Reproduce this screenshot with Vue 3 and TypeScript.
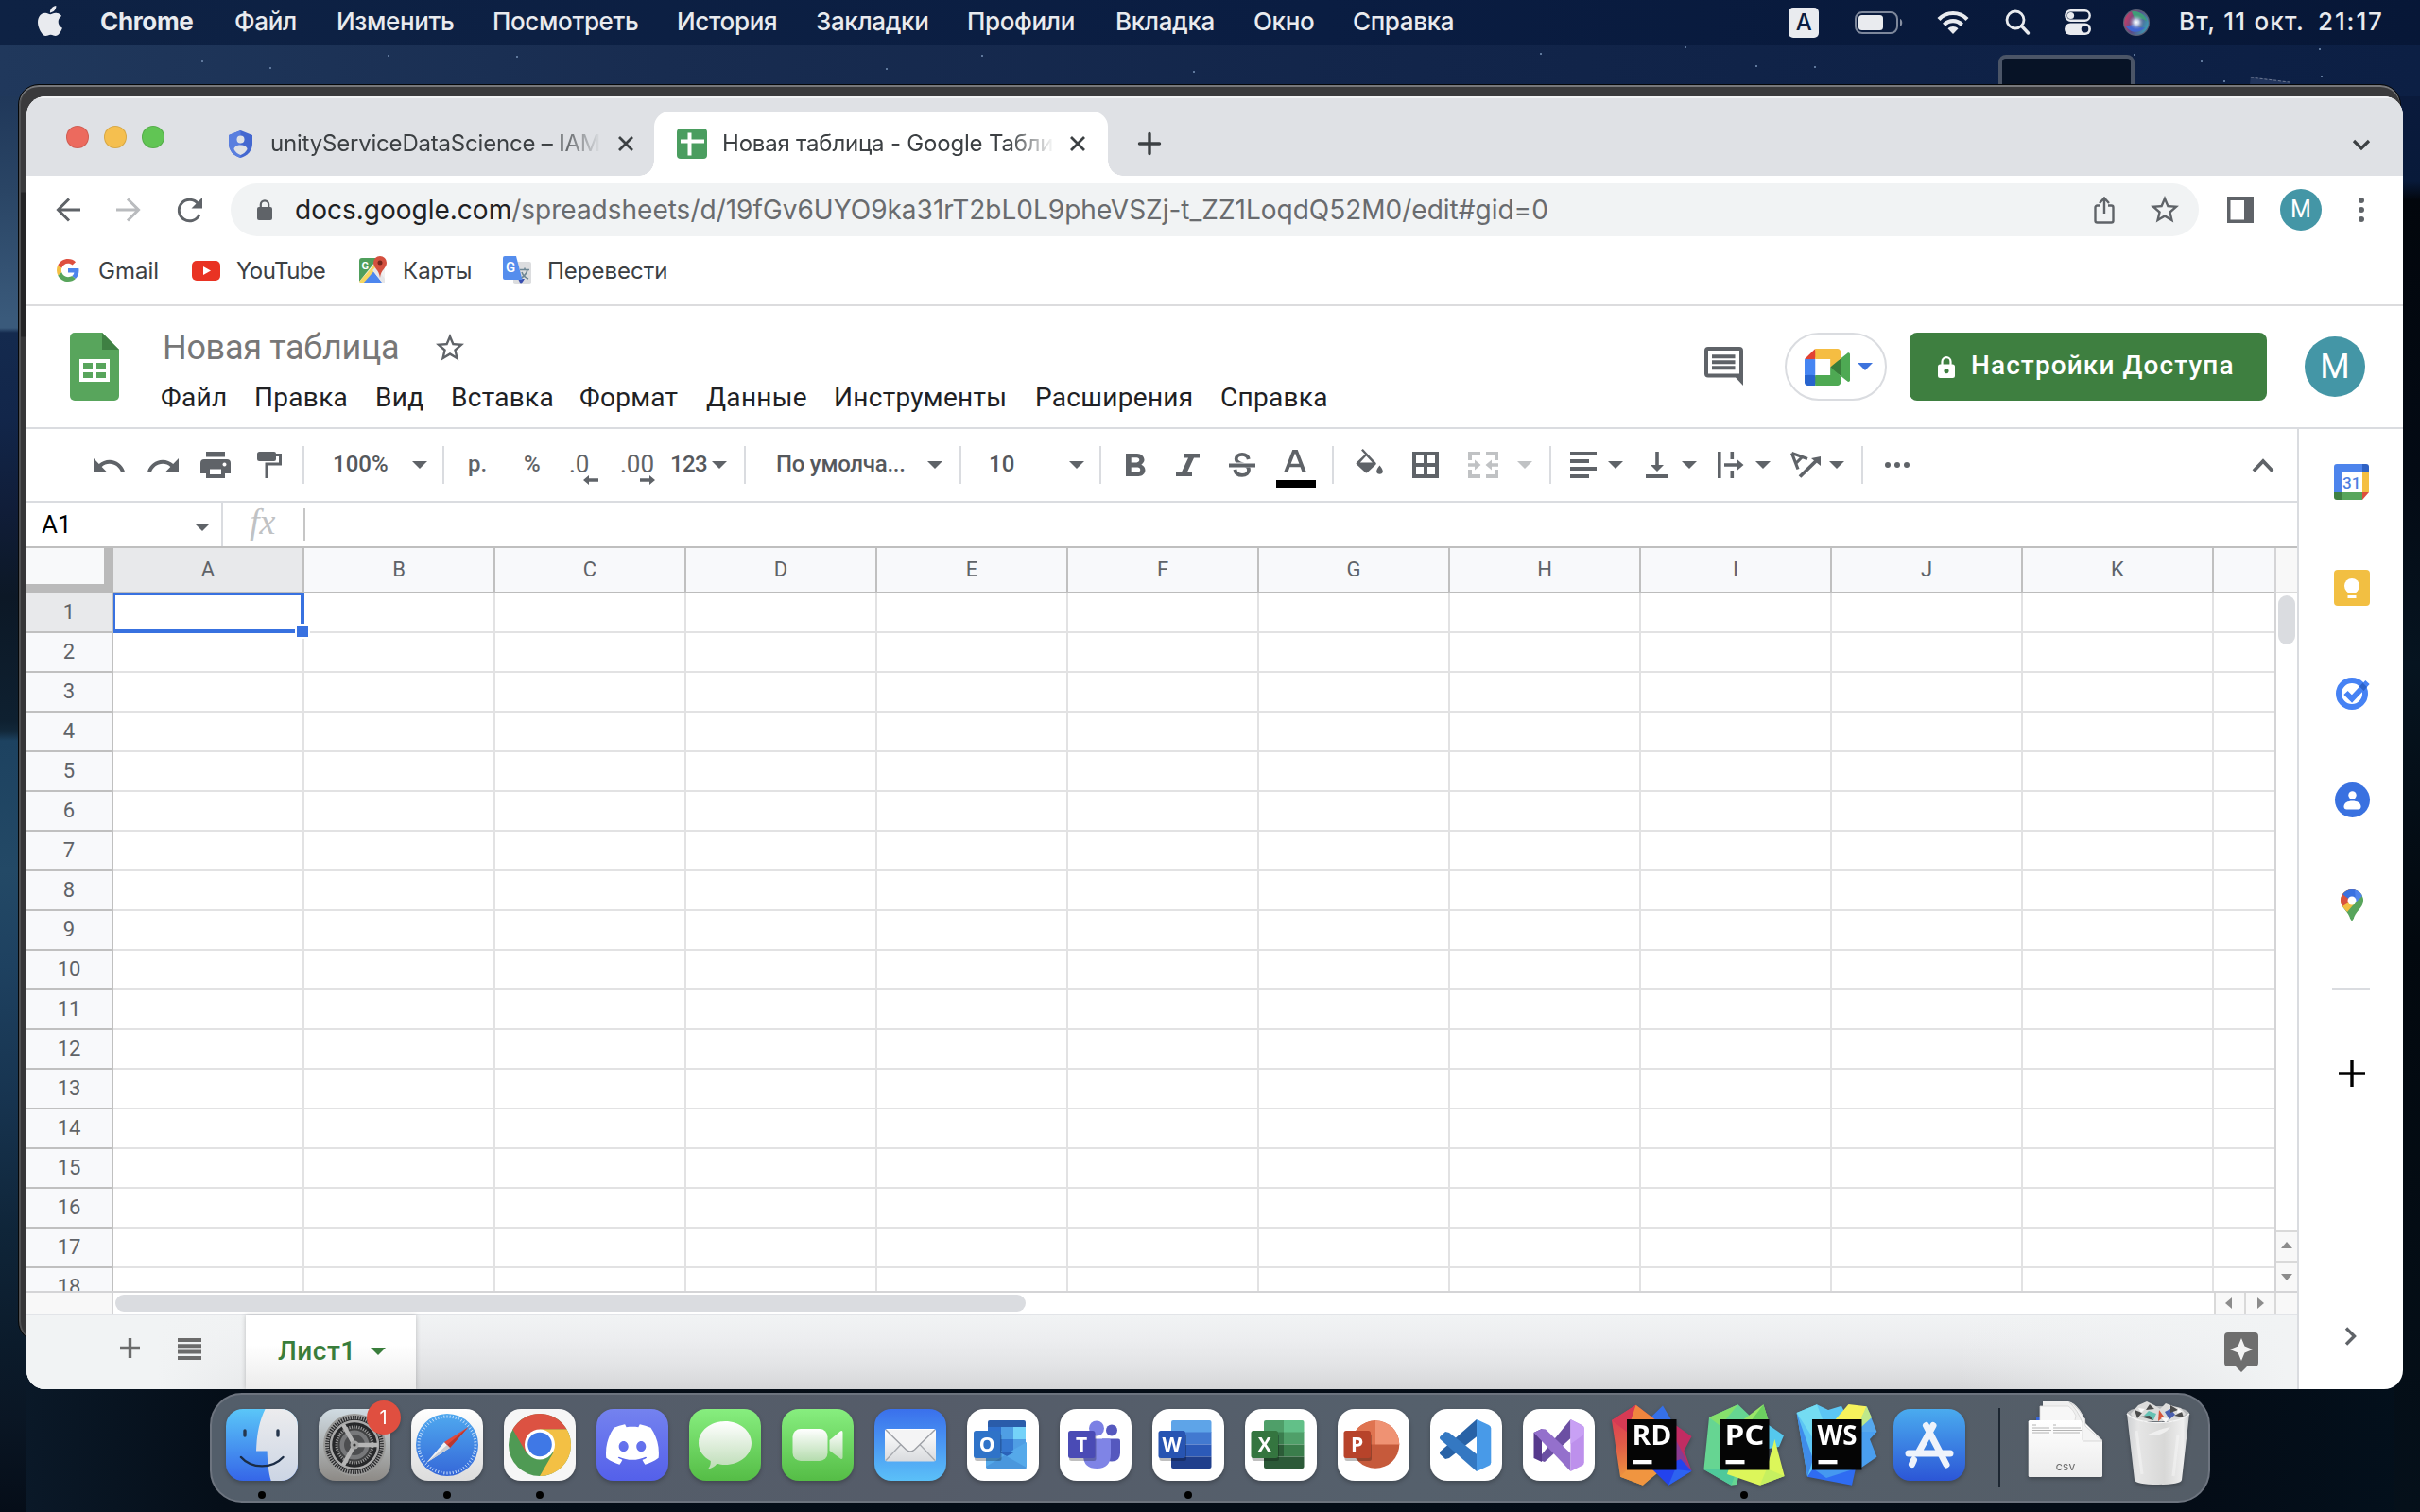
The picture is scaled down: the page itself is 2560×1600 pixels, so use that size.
<script setup lang="ts">
import { h } from 'vue'

interface IconDef {
  w: number
  h: number
  vb?: string
  body: string
}

const ARROW = '#5f6368'

const G_LOGO =
  '<path fill="#de4f3f" d="M24 9.500c3.540 0 6.710 1.220 9.210 3.600l6.850-6.850C35.900 2.380 30.470 0 24 0 14.620 0 6.510 5.380 2.560 13.220l7.980 6.190C12.430 13.720 17.740 9.500 24 9.500z"/>' +
  '<path fill="#4d84ec" d="M46.980 24.550c0-1.570-.15-3.090-.38-4.550H24v9.020h12.940c-.58 2.960-2.260 5.480-4.780 7.180l7.730 6c4.510-4.180 7.090-10.360 7.090-17.650z"/>' +
  '<path fill="#f4bf42" d="M10.530 28.590c-.48-1.450-.76-2.990-.76-4.590s.27-3.140.76-4.590l-7.980-6.190C.92 16.460 0 20.120 0 24c0 3.880.92 7.540 2.560 10.780l7.970-6.190z"/>' +
  '<path fill="#58a55c" d="M24 48c6.480 0 11.930-2.130 15.890-5.810l-7.730-6c-2.150 1.450-4.920 2.300-8.160 2.300-6.260 0-11.570-4.220-13.470-9.910l-7.980 6.190C6.510 42.620 14.620 48 24 48z"/>'

const STAR =
  'M22 9.240l-7.190-.62L12 2 9.190 8.630 2 9.240l5.460 4.730L5.820 21 12 17.270 18.180 21l-1.630-7.030L22 9.240zM12 15.400l-3.760 2.270 1-4.280-3.320-2.880 4.380-.38L12 6.100l1.710 4.040 4.380.38-3.320 2.880 1 4.280L12 15.400z'

const icons: Record<string, IconDef> = {
  apple: {
    w: 26, h: 32, vb: '2.2 0 19.600 24',
    body: '<path fill="#e9ebef" d="M12.152 6.896c-.948 0-2.415-1.078-3.96-1.04-2.04.027-3.91 1.183-4.961 3.014-2.117 3.675-.546 9.103 1.519 12.09 1.013 1.454 2.208 3.09 3.792 3.039 1.52-.065 2.09-.987 3.935-.987 1.831 0 2.35.987 3.96.948 1.637-.026 2.676-1.48 3.676-2.948 1.156-1.688 1.636-3.325 1.662-3.415-.039-.013-3.182-1.221-3.22-4.857-.026-3.04 2.48-4.494 2.597-4.559-1.429-2.09-3.623-2.324-4.39-2.376-2-.156-3.675 1.09-4.61 1.09zM15.53 3.83c.843-1.012 1.4-2.427 1.245-3.83-1.207.052-2.662.805-3.532 1.818-.78.896-1.454 2.338-1.273 3.714 1.338.104 2.715-.688 3.559-1.701"/>',
  },
  battery: {
    w: 52, h: 24,
    body: '<rect x="1" y="1" width="44" height="22" rx="7" fill="none" stroke="#7d879b" stroke-width="2"/><rect x="4" y="4" width="26" height="16" rx="3.500" fill="#e9ebef"/><path d="M48 8c3 1 3 7 0 8z" fill="#8790a2"/>',
  },
  wifi: {
    w: 34, h: 25,
    body: '<g fill="none" stroke="#e9ebef" stroke-width="4.200"><path d="M2 9.500C10 .800 24 .800 32 9.500"/><path d="M7.500 15.200c5.500-5.400 13.500-5.400 19 0"/></g><path fill="#e9ebef" d="M11.500 19.200c3-3 8-3 11 0L17 25z"/>',
  },
  search: {
    w: 27, h: 27,
    body: '<circle cx="11" cy="11" r="9" fill="none" stroke="#e9ebef" stroke-width="2.800"/><path d="M17.500 17.500l7 7.500" stroke="#e9ebef" stroke-width="3.400" stroke-linecap="round"/>',
  },
  control: {
    w: 28, h: 27,
    body: '<rect x="1.300" y="1.300" width="25.400" height="10.400" rx="5.200" fill="none" stroke="#e9ebef" stroke-width="2.400"/><circle cx="6.500" cy="6.500" r="3.600" fill="#e9ebef"/><rect x="0" y="14.500" width="28" height="12.500" rx="6.200" fill="#e9ebef"/><circle cx="21.500" cy="20.800" r="3.800" fill="#0b1c40"/>',
  },
  siri: {
    w: 28, h: 28,
    body: '<defs><radialGradient id="siriCore"><stop offset="0" stop-color="#fff"/><stop offset=".35" stop-color="#dfeeff" stop-opacity=".8"/><stop offset="1" stop-color="#88a" stop-opacity="0"/></radialGradient><linearGradient id="siriBase" x1="0" y1=".3" x2="1" y2=".7"><stop offset="0" stop-color="#c93d66"/><stop offset=".45" stop-color="#5a4a86"/><stop offset="1" stop-color="#3aa0b8"/></linearGradient></defs><circle cx="14" cy="14" r="14" fill="#5a6076"/><circle cx="14" cy="14" r="12.800" fill="url(#siriBase)"/><path d="M9 2.500c8-2 15 4 16 10-5-4-9-2-13-3z" fill="#3f9c78"/><path d="M3 18c4 6 13 9 20 1-7 2-9-3-13-3z" fill="#3f66d0"/><circle cx="14" cy="13.500" r="8" fill="url(#siriCore)"/>',
  },
  shield: {
    w: 25, h: 29,
    body: '<path d="M12.500 0L25 5v9c0 7-5 13-12.500 15C5 27 0 21 0 14V5z" fill="#4367d0"/><path d="M12.500 0L0 5v9c0 7 5 13 12.500 15z" fill="#5a7fdf"/><circle cx="12.500" cy="9.500" r="4" fill="#dfe1e5"/><path d="M12.500 15.500c4 0 7 2 7 4.500-1.500 3-4 5-7 6-3-1-5.500-3-7-6 0-2.500 3-4.500 7-4.500z" fill="#dfe1e5"/>',
  },
  close: { w: 18, h: 18, body: '<path d="M2 2l14 14M16 2L2 16" stroke="#3c4043" stroke-width="2.800"/>' },
  sheetFav: {
    w: 32, h: 32,
    body: '<rect width="32" height="32" rx="4" fill="#4a9d5f"/><path d="M11.500 4.500h4v24h-4zM4 11.500h25v4H4z" fill="#fff"/>',
  },
  plusTab: { w: 24, h: 24, body: '<path d="M12 1.500v21M1.500 12h21" stroke="#3c4043" stroke-width="3.400" stroke-linecap="round"/>' },
  chevDown: { w: 20, h: 12, body: '<path d="M2 2l8 8 8-8" fill="none" stroke="#3c4043" stroke-width="3.200"/>' },
  back: { w: 26, h: 26, body: '<path d="M26 13H3M14 1.500L2.500 13 14 24.500" fill="none" stroke="#5f6368" stroke-width="3"/>' },
  forward: { w: 26, h: 26, body: '<path d="M0 13h23M12 1.500L23.500 13 12 24.500" fill="none" stroke="#b9bbbe" stroke-width="3"/>' },
  reload: { w: 27, h: 27, body: '<path d="M22.500 6.500A11.300 11.300 0 1 0 24 18" fill="none" stroke="#5f6368" stroke-width="3"/><path d="M27 0v11.500H15.500z" fill="#5f6368"/>' },
  lockBar: { w: 16, h: 22, body: '<rect y="8" width="16" height="14" rx="2" fill="#5f6368"/><path d="M3.800 9V5.500a4.200 4.200 0 0 1 8.400 0V9" fill="none" stroke="#5f6368" stroke-width="2.200"/>' },
  share: { w: 22, h: 30, body: '<path d="M7 10.500H3.500a2 2 0 0 0-2 2v14a2 2 0 0 0 2 2h15a2 2 0 0 0 2-2v-14a2 2 0 0 0-2-2H15M11 19V3M6 8l5-5.500L16 8" fill="none" stroke="#5f6368" stroke-width="2.400"/>' },
  starBar: { w: 36, h: 36, vb: '0 0 24 24', body: `<path fill="#5f6368" d="${STAR}"/>` },
  sidePanel: { w: 28, h: 28, body: '<path fill="#5f6368" fill-rule="evenodd" d="M0 0h28v28H0zM3.500 4v20.500H18V4z"/>' },
  kebab: { w: 6, h: 26, body: '<g fill="#5f6368"><circle cx="3" cy="3" r="3"/><circle cx="3" cy="13" r="3"/><circle cx="3" cy="23" r="3"/></g>' },
  google: { w: 24, h: 24, vb: '0 0 48 48', body: G_LOGO },
  youtube: { w: 30, h: 21, body: '<rect width="30" height="21" rx="5" fill="#e93323"/><path d="M12 6l8 4.500-8 4.500z" fill="#fff"/>' },
  gmaps: {
    w: 30, h: 30,
    body: '<rect x="0" y="2" width="27" height="27" rx="3" fill="#f1f1f1"/><path d="M0 5a3 3 0 0 1 3-3h17L0 27z" fill="#4f9f5c"/><path d="M2 29L14 15l11 14z" fill="#4d86ee"/><path d="M0 27L17 8l3 3L4 29H2z" fill="#f6d660"/><path d="M14 15l4-4 9 13v5h-2z" fill="#e6e6e8"/><text x="2.500" y="13.500" font-family="Roboto, sans-serif" font-size="11" font-weight="700" fill="#fff">G</text><path d="M22 0a7 7 0 0 1 7 7c0 6-6 7-7 16-1-9-7-10-7-16a7 7 0 0 1 7-7z" fill="#d4503f"/><circle cx="22" cy="7" r="2.500" fill="#76261c"/>',
  },
  translate: {
    w: 30, h: 31,
    body: '<rect x="11" y="6" width="19" height="24" rx="2" fill="#dcdddf"/><path d="M16 24l3 6 4-6z" fill="#3a4fb0"/><path d="M18 14.500h10M23 12.500v2M26 14.500c-1 5-4 7-7 9M20 17c1 3 4 6 7 7" stroke="#6e8794" stroke-width="1.600" fill="none"/><path d="M2 0h12l6.500 25H2a2 2 0 0 1-2-2V2a2 2 0 0 1 2-2z" fill="#558ded"/><text x="3" y="17" font-family="Roboto, sans-serif" font-size="15" font-weight="500" fill="#fff">G</text>',
  },
  sheets: {
    w: 52, h: 72,
    body: '<path d="M5 0h29l18 18v49a5 5 0 0 1-5 5H5a5 5 0 0 1-5-5V5a5 5 0 0 1 5-5z" fill="#58a55c"/><path d="M34 0l18 18H34z" fill="#3f8043"/><path fill="#fff" fill-rule="evenodd" d="M10 28h32v24H10zM14 32v6h10v-6zM28 32v6h10v-6zM14 42v6h10v-6zM28 42v6h10v-6z"/>',
  },
  starTitle: { w: 36, h: 36, vb: '0 0 24 24', body: `<path fill="#5f6368" d="${STAR}"/>` },
  comment: {
    w: 41, h: 41,
    body: '<path fill="#5f6368" fill-rule="evenodd" d="M4 0h33a4 4 0 0 1 4 4v37l-8-8.500H4a4 4 0 0 1-4-4V4a4 4 0 0 1 4-4zM4 4v24.500h33V4z"/><path fill="#5f6368" d="M8 8.300h24.500v4H8zM8 14.300h24.500v4H8zM8 20.300h24.500v4H8z"/>',
  },
  meet: {
    w: 48, h: 39, vb: '0 0 87.500 72',
    body: '<path fill="#397d3b" d="M49.500 36l8.530 9.750 11.470 7.330 2-17.020-2-16.640-11.690 6.440z"/><path fill="#2764ce" d="M0 51.500V66c0 3.315 2.685 6 6 6h14.500l3-10.960-3-9.540-9.950-3z"/><path fill="#e14234" d="M20.500 0L0 20.500l10.550 3 9.950-3 2.950-9.410z"/><path fill="#4585f2" d="M20.500 20.500H0v31h20.500z"/><path fill="#4ea953" d="M82.600 8.680L69.500 19.420v33.660l13.160 10.790c1.970 1.540 4.850.135 4.850-2.370V11c0-2.535-2.945-3.925-4.910-2.320zM49.500 36v15.500h-29V72h43c3.315 0 6-2.685 6-6V53.080z"/><path fill="#f5bd42" d="M63.500 0h-43v20.500h29V36l20-16.570V6c0-3.315-2.685-6-6-6z"/>',
  },
  caret: { w: 16, h: 8, body: `<path d="M0 0h16l-8 8z" fill="${ARROW}"/>` },
  caretPale: { w: 16, h: 8, body: '<path d="M0 0h16l-8 8z" fill="#c0c2c4"/>' },
  caretBlue: { w: 16, h: 8, body: '<path d="M0 0h16l-8 8z" fill="#3d73dd"/>' },
  caretGreen: { w: 16, h: 8, body: '<path d="M0 0h16l-8 8z" fill="#397d3b"/>' },
  lockWhite: { w: 18, h: 23, body: '<path fill="#fff" fill-rule="evenodd" d="M2.500 8.500h13A2.500 2.500 0 0 1 18 11v9.500a2.500 2.500 0 0 1-2.500 2.500h-13A2.500 2.500 0 0 1 0 20.500V11a2.500 2.500 0 0 1 2.500-2.500zM9 13a2.600 2.600 0 1 0 .010 0z"/><path d="M4.500 9V5.700a4.500 4.500 0 0 1 9 0V9" fill="none" stroke="#fff" stroke-width="2.200"/>' },
  undo: { w: 33, h: 15, vb: '2 7 20.500 9', body: '<path fill="#5f6368" d="M12.500 8c-2.650 0-5.050.99-6.900 2.600L2 7v9h9l-3.620-3.620c1.390-1.160 3.160-1.880 5.120-1.880 3.540 0 6.550 2.310 7.600 5.500l2.370-.78C21.080 11.030 17.150 8 12.500 8z"/>' },
  redo: { w: 33, h: 15, vb: '1.500 7 20.500 9', body: '<path fill="#5f6368" d="M18.400 10.600C16.550 8.990 14.150 8 11.500 8c-4.650 0-8.580 3.030-9.960 7.220L3.900 16c1.050-3.190 4.050-5.500 7.600-5.500 1.950 0 3.730.72 5.120 1.880L13 16h9V7l-3.600 3.600z"/>' },
  print: { w: 32, h: 28, body: '<path fill="#5f6368" d="M6 0h20v5.500H6z"/><path fill="#5f6368" fill-rule="evenodd" d="M4 8h24a4 4 0 0 1 4 4v11h-6v5H6v-5H0V12a4 4 0 0 1 4-4zM10 18.500v5.500h12v-5.500zM25.500 11.500a2 2 0 1 0 .010 0z"/>' },
  paint: { w: 26, h: 28, body: '<path fill="#5f6368" d="M2.500 0H18a2 2 0 0 1 2 2h6v12.500H12V28H8.500V11.500H23V5h-3v3a2 2 0 0 1-2 2H2.500A2.500 2.500 0 0 1 0 7.500v-5A2.500 2.500 0 0 1 2.500 0z"/>' },
  arrL: { w: 16, h: 10, body: '<path d="M0 5l6-5v3.300h10v3.400H6V10z" fill="#5f6368"/>' },
  arrR: { w: 16, h: 10, body: '<path d="M16 5l-6-5v3.300H0v3.400h10V10z" fill="#5f6368"/>' },
  bold: { w: 20, h: 24, vb: '7 5 10.500 14', body: '<path fill="#5f6368" d="M15.600 11.790c.97-.67 1.650-1.770 1.650-2.790 0-2.260-1.750-4-4-4H7v14h7.040c2.090 0 3.710-1.700 3.710-3.790 0-1.520-.86-2.820-2.150-3.420zM10 7.500h3c.83 0 1.500.67 1.500 1.500s-.67 1.500-1.500 1.500h-3v-3zm3.500 9H10v-3h3.500c.83 0 1.500.67 1.500 1.500s-.67 1.500-1.500 1.500z"/>' },
  italic: { w: 25, h: 24, body: '<path fill="#5f6368" d="M8 0h17v4.500h-6L12 19.500h5V24H0v-4.500h6L13 4.500H8z"/>' },
  strike: { w: 28, h: 26, body: '<path d="M20.800 7C20 3.500 17.500 1.900 14 1.900c-3.700 0-6.300 2-6.300 4.800 0 2.600 2 4 6.300 5.300 4.600 1.400 7 3 7 6.200 0 3.400-2.800 5.700-7 5.700-4.400 0-7-2.200-7.600-6" fill="none" stroke="#5f6368" stroke-width="3.800"/><path d="M0 10.500h28v5H0z" fill="#fff"/><path d="M0 11.500h28v4H0z" fill="#5f6368"/>' },
  textColor: { w: 42, h: 40, body: '<path d="M17.300 0h5.400L32 24h-4.300l-2.100-5.800H14.400L12.300 24H8zM15.600 14.800h8.800L20 3.500z" fill="#5f6368"/><path d="M0 32h42v8H0z" fill="#000"/>' },
  fill: { w: 29, h: 27, body: '<path fill="#5f6368" fill-rule="evenodd" d="M6 1.600L7.800 0l13.500 14.500a1.600 1.600 0 0 1 0 2.300l-8.500 8a2 2 0 0 1-2.800 0l-8.900-8.300a1.600 1.600 0 0 1 0-2.300L10 5.800zM11.300 7.500L4.800 14.500h13z"/><path d="M25.500 17.500c1 1.600 3.300 4 3.300 6a3.300 3.300 0 0 1-6.600 0c0-2 2.300-4.400 3.300-6z" fill="#5f6368"/>' },
  borders: { w: 28, h: 28, body: '<path fill="#5f6368" fill-rule="evenodd" d="M0 0h28v28H0zM4 4v8h8V4zM16 4v8h8V4zM4 16v8h8v-8zM16 16v8h8v-8z"/>' },
  merge: { w: 32, h: 28, body: '<g fill="#c0c2c4"><path d="M0 0h13v4H4v5H0zM19 0h13v9h-4V4h-9zM0 19h4v5h9v4H0zM28 19h4v9H19v-4h9zM0 12.300h7V8.500l6.500 5.500L7 19.500v-3.800H0zM32 12.300h-7V8.500L18.500 14l6.500 5.500v-3.800h7z"/></g>' },
  align: { w: 28, h: 28, body: '<path fill="#5f6368" d="M0 0h28v4H0zM0 8h20v4H0zM0 16h28v4H0zM0 24h20v4H0z"/>' },
  valign: { w: 24, h: 28, body: '<path fill="#5f6368" d="M0 24h24v4H0zM10.200 0h3.600v14H19l-7 7-7-7h5.200z"/>' },
  wrap: { w: 28, h: 28, body: '<path fill="#5f6368" d="M0 0h3.600v28H0zM13.500 0h3.600v8h-3.600zM13.500 20h3.600v8h-3.600zM7 12.200h13.500V8l7 6-7 6v-4.200H7z"/>' },
  rotate: { w: 32, h: 28, body: '<path d="M10 26.500L29 8" stroke="#5f6368" stroke-width="3.800"/><path d="M22 7l10-2v10z" fill="#5f6368"/><path d="M1.500 1.500l16.500 6M1.500 1.500l6.500 17M12.500 5.500l-6.800 7" fill="none" stroke="#5f6368" stroke-width="3.200"/>' },
  more: { w: 28, h: 6, body: '<g fill="#5f6368"><circle cx="4" cy="3" r="3"/><circle cx="14" cy="3" r="3"/><circle cx="24" cy="3" r="3"/></g>' },
  chevUp: { w: 24, h: 15, body: '<path d="M2 13.500L12 3l10 10.500" fill="none" stroke="#5f6368" stroke-width="3.800"/>' },
  addSheet: { w: 21, h: 21, body: '<path d="M10.500 0v21M0 10.500h21" stroke="#6b6b6b" stroke-width="3.400"/>' },
  listSheets: { w: 25, h: 23, body: '<path fill="#6b6b6b" d="M0 0h25v4H0zM0 6.300h25v4H0zM0 12.600h25v4H0zM0 18.900h25v4H0z"/>' },
  explore: { w: 36, h: 42, body: '<path d="M4 0h28a4 4 0 0 1 4 4v28a4 4 0 0 1-4 4h-8l-6 6-6-6H4a4 4 0 0 1-4-4V4a4 4 0 0 1 4-4z" fill="#6e6e6e"/><path d="M18 6l3.500 8.500L30 18l-8.500 3.500L18 30l-3.500-8.500L6 18l8.500-3.500z" fill="#f4f4f4"/>' },
  chevRight: { w: 13, h: 20, body: '<path d="M2 1.500l8.500 8.500L2 18.500" fill="none" stroke="#5f6368" stroke-width="3.400"/>' },
  triU: { w: 12, h: 7, body: '<path d="M6 0l6 7H0z" fill="#8c8c8c"/>' },
  triD: { w: 12, h: 7, body: '<path d="M6 7l6-7H0z" fill="#8c8c8c"/>' },
  triL: { w: 7, h: 12, body: '<path d="M0 6l7-6v12z" fill="#8c8c8c"/>' },
  triR: { w: 7, h: 12, body: '<path d="M7 6L0 0v12z" fill="#8c8c8c"/>' },
  calendar: {
    w: 38, h: 38,
    body: '<path d="M3 0h27v8H8v22H0V3a3 3 0 0 1 3-3z" fill="#4d84ec"/><path d="M30 0h4a3 3 0 0 1 3 3v5h-7z" fill="#2f62c4"/><path d="M30 8h7v22h-7z" fill="#f4bf42"/><path d="M0 30h8v8H3a3 3 0 0 1-3-3z" fill="#3f8043"/><path d="M8 30h22v8H8z" fill="#58a55c"/><path d="M30 30h7l-7 8z" fill="#dd4f3c"/><path d="M8 8h22v22H8z" fill="#fff"/><text x="18.700" y="25.500" text-anchor="middle" font-family="Roboto, sans-serif" font-size="17" font-weight="500" fill="#4d7fe0">31</text>',
  },
  keep: { w: 38, h: 38, body: '<rect width="38" height="38" rx="4" fill="#f2bf42"/><circle cx="19" cy="17" r="8" fill="#fff"/><path d="M14.500 22h9v3h-9zM14.500 27h9v3h-9z" fill="#fff"/>' },
  tasks: { w: 36, h: 34, body: '<circle cx="17" cy="17" r="14" fill="none" stroke="#4682f4" stroke-width="6"/><path d="M10.500 16l6.500 6.500L33.500 5" fill="none" stroke="#4682f4" stroke-width="6"/><path d="M25 9.500l4.500 4.500L33 10 28.500 5.500z" fill="#2c63cb"/>' },
  contacts: { w: 37, h: 37, body: '<circle cx="18.500" cy="18.500" r="18.500" fill="#3971e0"/><circle cx="18.500" cy="13.500" r="4.200" fill="#fff"/><path d="M9.500 25.500c0-4 4-6 9-6s9 2 9 6c0 2-1 3-3 3h-12c-2 0-3-1-3-3z" fill="#fff"/>' },
  mapsPin: {
    w: 24, h: 34,
    body: '<defs><clipPath id="pinClip"><path d="M12 0a12 12 0 0 1 12 12c0 8-9 11-10.500 20.500q-1.500 3-3 0C9 23 0 20 0 12A12 12 0 0 1 12 0z"/></clipPath></defs><g clip-path="url(#pinClip)"><path d="M0 0h24v34H0z" fill="#58a55c"/><path d="M-2 -2h26v6L7 24-2 14z" fill="#f2bf42"/><path d="M-4 -2h20L12 12 0 19z" fill="#d8523f"/><path d="M2 5L8-3h18v6L12 13z" fill="#3971e0"/><path d="M15-2h11v6l-4 4-6 6z" fill="#4f84ec"/></g><circle cx="12" cy="12" r="4.500" fill="#fff"/>',
  },
  plusPanel: { w: 28, h: 28, body: '<path d="M14 0v28M0 14h28" stroke="#000" stroke-width="3.400"/>' },
}

const Icon = (props: { name: string }) => {
  const d = icons[props.name]
  return h('svg', {
    width: d.w,
    height: d.h,
    viewBox: d.vb ?? `0 0 ${d.w} ${d.h}`,
    preserveAspectRatio: 'none',
    innerHTML: d.body,
  })
}
Icon.props = ['name']

const menuBar = ['Файл', 'Изменить', 'Посмотреть', 'История', 'Закладки', 'Профили', 'Вкладка', 'Окно', 'Справка']
const docMenu = ['Файл', 'Правка', 'Вид', 'Вставка', 'Формат', 'Данные', 'Инструменты', 'Расширения', 'Справка']
const columns = ['A', 'B', 'C', 'D', 'E', 'F', 'G', 'H', 'I', 'J', 'K']

// Faint stars visible in the strip of sky above the windows: x, y.
const stars = [[213, 64], [285, 71], [410, 58], [546, 59], [937, 72], [1038, 58], [1262, 75], [1629, 56], [1782, 49], [1857, 69], [1919, 70], [2328, 64], [2352, 85], [2453, 51], [2455, 80], [2257, 57]]
const starPath = stars.map(([x, y]) => `M${x} ${y - 49}h2v2h-2z`).join('')

const tile = (fill: string) => `<rect x="11" y="7" width="76" height="76" rx="18" fill="${fill}"/>`
const grad = (id: string, a: string, b: string) =>
  `<defs><linearGradient id="${id}" x1="0" y1="0" x2="0" y2="1"><stop offset="0" stop-color="${a}"/><stop offset="1" stop-color="${b}"/></linearGradient></defs>`
const letterBox = (x: number, fill: string, letter: string) =>
  `<rect x="${x + 1}" y="33" width="28.500" height="29" rx="2.500" fill="#000" opacity=".25"/><rect x="${x}" y="30" width="28.500" height="29" rx="2.500" fill="${fill}"/><text x="${x + 14.200}" y="52.300" text-anchor="middle" font-family="'Open Sans', sans-serif" font-weight="700" font-size="21" fill="#fff">${letter}</text>`
const jetBox = (text: string) =>
  `<rect x="23" y="18" width="52.500" height="53.500" fill="#050505"/><text x="28.500" y="45" textLength="42" lengthAdjust="spacingAndGlyphs" font-family="'Open Sans', sans-serif" font-weight="700" font-size="28" fill="#fff">${text}</text><path d="M29.500 61h20v4.300h-20z" fill="#fff"/>`

const ticks = (n: number, r1: number, r2: number, attrs: string) => {
  let s = ''
  for (let i = 0; i < n; i++) {
    const a = (i / n) * Math.PI * 2
    const c = Math.cos(a)
    const t = Math.sin(a)
    s += `M${(49 + c * r1).toFixed(2)} ${(45 + t * r1).toFixed(2)}L${(49 + c * r2).toFixed(2)} ${(45 + t * r2).toFixed(2)}`
  }
  return `<path d="${s}" ${attrs}/>`
}

const dockApps: { name: string; open?: boolean; body: string }[] = [
  {
    name: 'Finder', open: true,
    body: grad('finderBlue', '#5ac6f8', '#3566e8') + grad('finderPale', '#ececee', '#ccd5e4') + tile('url(#finderBlue)') +
      '<path d="M52.600 7H69a18 18 0 0 1 18 18v40a18 18 0 0 1-18 18H58.700C56 74 55 64 54.600 51.500H43C43.500 35 46 20 52.600 7z" fill="url(#finderPale)"/><path d="M31 30v5M66 30v5" stroke="#25364d" stroke-width="3.400" stroke-linecap="round"/><path d="M27 58c11 12.500 33 12.500 44.500 0" fill="none" stroke="#1b2c45" stroke-width="2.400" stroke-linecap="round"/>',
  },
  {
    name: 'Settings',
    body: grad('setBg', '#d0dbe2', '#8d8a86') + tile('url(#setBg)') +
      '<circle cx="49" cy="45" r="33" fill="#9a9a98"/><circle cx="49" cy="45" r="31" fill="#262729"/>' +
      ticks(72, 27, 31.500, 'stroke="#9b9b9b" stroke-width="1.300"') +
      '<circle cx="49" cy="45" r="25" fill="none" stroke="#a9a9a9" stroke-width="2.500"/><circle cx="49" cy="45" r="17" fill="#77787a" stroke="#404142" stroke-width="3"/>' +
      ticks(48, 17.500, 20.500, 'stroke="#999" stroke-width="1.200"') +
      '<circle cx="49" cy="45" r="11" fill="#4d4e50"/><path d="M49 45h25M49 45L37 23.500M49 45L37 66.500" stroke="#b5b5b5" stroke-width="4.500"/><circle cx="49" cy="45" r="4.500" fill="#a5a5a5"/><circle cx="49" cy="45" r="1.600" fill="#333"/><circle cx="80" cy="16" r="18" fill="#e04f40"/><text x="79.500" y="23" text-anchor="middle" font-family="Inter, sans-serif" font-size="20" fill="#fff">1</text>',
  },
  {
    name: 'Safari', open: true,
    body: grad('safBg', '#ffffff', '#dcdcdc') + grad('safBlue', '#4fa9ef', '#3567d8') + tile('url(#safBg)') +
      '<circle cx="49" cy="45" r="33" fill="url(#safBlue)"/>' + ticks(60, 28.500, 31.500, 'stroke="#cfe4fb" stroke-width="1"') +
      '<path d="M27 64l19-22 6 6z" fill="#f2f2f2"/><path d="M71.500 26L46 42l6 6z" fill="#e0493c"/><path d="M71.500 26L49 45l3 3z" fill="#b9372f"/><path d="M27 64l22-19 3 3z" fill="#c9cdd3"/>',
  },
  {
    name: 'Chrome', open: true,
    body: tile('#f6f6f6') +
      '<circle cx="49" cy="45" r="33" fill="#4f9a54"/><path d="M20.420 28.500A33 33 0 0 1 77.580 28.500H49L34.700 53.200z" fill="#dc5242"/><path d="M49 28.500h28.600A33 33 0 0 1 49 78l14.300-24.800z" fill="#f3c044"/><circle cx="49" cy="44.500" r="16" fill="#fff"/><circle cx="49" cy="44.500" r="12.800" fill="#3f78e6"/>',
  },
  {
    name: 'Discord',
    body: grad('disBg', '#7482ef', '#5460ea') + tile('url(#disBg)') +
      '<g transform="translate(21 16.500) scale(2.330)"><path fill="#fff" d="M20.317 4.3698a19.7913 19.7913 0 00-4.8851-1.5152.0741.0741 0 00-.0785.0371c-.211.3753-.4447.8648-.6083 1.2495-1.8447-.2762-3.68-.2762-5.4868 0-.1636-.3933-.4058-.8742-.6177-1.2495a.077.077 0 00-.0785-.037 19.7363 19.7363 0 00-4.8852 1.515.0699.0699 0 00-.0321.0277C.5334 9.0458-.319 13.5799.0992 18.0578a.0824.0824 0 00.0312.0561c2.0528 1.5076 4.0413 2.4228 5.9929 3.0294a.0777.0777 0 00.0842-.0276c.4616-.6304.8731-1.2952 1.226-1.9942a.076.076 0 00-.0416-.1057c-.6528-.2476-1.2743-.5495-1.8722-.8923a.077.077 0 01-.0076-.1277c.1258-.0943.2517-.1923.3718-.2914a.0743.0743 0 01.0776-.0105c3.9278 1.7933 8.18 1.7933 12.0614 0a.0739.0739 0 01.0785.0095c.1202.099.246.1981.3728.2924a.077.077 0 01-.0066.1276 12.2986 12.2986 0 01-1.873.8914.0766.0766 0 00-.0407.1067c.3604.698.7719 1.3628 1.225 1.9932a.076.076 0 00.0842.0286c1.961-.6067 3.9495-1.5219 6.0023-3.0294a.077.077 0 00.0313-.0552c.5004-5.177-.8382-9.6739-3.5485-13.6604a.061.061 0 00-.0312-.0286zM8.02 15.3312c-1.1825 0-2.1569-1.0857-2.1569-2.419 0-1.3332.9555-2.4189 2.157-2.4189 1.2108 0 2.1757 1.0952 2.1568 2.419 0 1.3332-.9555 2.4189-2.1569 2.4189zm7.9748 0c-1.1825 0-2.1569-1.0857-2.1569-2.419 0-1.3332.9554-2.4189 2.1569-2.4189 1.2108 0 2.1757 1.0952 2.1568 2.419 0 1.3332-.946 2.4189-2.1568 2.4189Z"/></g>',
  },
  {
    name: 'Messages',
    body: grad('msgBg', '#87ee7f', '#55bd46') + grad('msgBub', '#ffffff', '#bddcb6') + tile('url(#msgBg)') +
      '<path d="M49 20c15.500 0 28 10.300 28 23S64.500 66 49 66c-3 0-6-.4-8.500-1.200C38 68 35 70 31 70.500c2-2 3-5 2.800-8.500C26 58 21 51 21 43c0-12.700 12.500-23 28-23z" fill="url(#msgBub)"/>',
  },
  {
    name: 'FaceTime',
    body: grad('ftBg', '#87ee7f', '#55bd46') + grad('ftCam', '#ffffff', '#b5dcae') + tile('url(#ftBg)') +
      '<rect x="22.500" y="28" width="37" height="34" rx="8.500" fill="url(#ftCam)"/><path d="M61.500 40L73 30.500q2.500-1.500 2.500 1.500v26q0 3-2.500 1.500L61.500 51z" fill="url(#ftCam)"/>',
  },
  {
    name: 'Mail',
    body: grad('mailBg', '#3a70ec', '#5bc0f8') + grad('mailEnv', '#ffffff', '#d9dbde') + tile('url(#mailBg)') +
      '<rect x="22" y="28" width="54" height="34.500" rx="2.500" fill="url(#mailEnv)"/><path d="M23 61.500l17-18M75 61.500l-17-18" stroke="#a8abb0" stroke-width="1.300"/><path d="M23 29l21.500 21q4.500 4 9 0L75 29" fill="#f4f4f5" stroke="#9da0a6" stroke-width="1.400"/>',
  },
  {
    name: 'Outlook',
    body: tile('#fff') +
      '<path d="M35 19h36a2 2 0 0 1 2 2v24H33V21a2 2 0 0 1 2-2z" fill="#2a5caa"/><path d="M33 26h14v13H33zM47 39h13v13H47z" fill="#2f70cc"/><path d="M47 26h13v13H47zM60 39h13v13H60z" fill="#4f9ee4"/><path d="M60 26h13v13H60z" fill="#74d2f9"/><path d="M31 42l22 12 21-12v26a2 2 0 0 1-2 2H33a2 2 0 0 1-2-2z" fill="#55a9ea"/><path d="M33 39h14v15l-14-4z" fill="#2a5fb5"/><path d="M47 39h13v11l-7 5-6-4z" fill="#3577cf"/><path d="M44 52h18l-9 5z" fill="#2a62b8"/><path d="M51 56l23 13q0 1-2 1H33q-2 0-2-2z" fill="#4a97dd"/>' +
      letterBox(18, '#2f73c8', 'O'),
  },
  {
    name: 'Teams',
    body: tile('#fff') +
      '<circle cx="66" cy="29.500" r="6" fill="#5558be"/><path d="M56 38.500h17a2 2 0 0 1 2 2v13q0 9-9 9-6 0-10-5z" fill="#5558be"/><circle cx="50" cy="27.500" r="8" fill="#7b80e4"/><path d="M36 38.500h27a2 2 0 0 1 2 2v14q0 15.500-14.500 15.500T36 56z" fill="#7f84e6"/>' +
      letterBox(20, '#4a4bb5', 'T'),
  },
  {
    name: 'Word', open: true,
    body: tile('#fff') +
      '<path d="M33 19h38.500a2 2 0 0 1 2 2v11H31V21a2 2 0 0 1 2-2z" fill="#5ea4e8"/><path d="M31 31.500h42.500v13H31z" fill="#4279d0"/><path d="M31 44.500h42.500v13H31z" fill="#2c5ab8"/><path d="M31 57.500h42.500V68a2 2 0 0 1-2 2H33a2 2 0 0 1-2-2z" fill="#203f8c"/>' +
      letterBox(17.500, '#2754b2', 'W'),
  },
  {
    name: 'Excel',
    body: tile('#fff') +
      '<path d="M33 19h19v13H31V21a2 2 0 0 1 2-2z" fill="#4f9f69"/><path d="M52 19h19.500a2 2 0 0 1 2 2v11H52z" fill="#62c088"/><path d="M31 31.500h21v13H31z" fill="#3a7d4e"/><path d="M52 31.500h21.500v13H52z" fill="#4f9f69"/><path d="M31 44.500h21v13H31z" fill="#2c5c38"/><path d="M52 44.500h21.500v13H52z" fill="#3a7d4b"/><path d="M31 57.500h42.500V68a2 2 0 0 1-2 2H33a2 2 0 0 1-2-2z" fill="#2c5a38"/>' +
      letterBox(17.500, '#34753f', 'X'),
  },
  {
    name: 'PowerPoint',
    body: tile('#fff') +
      '<circle cx="51" cy="44.500" r="25.300" fill="#c65a3b"/><path d="M51 44.500V19.200A25.300 25.300 0 0 1 76.300 44.500z" fill="#ef9273"/><path d="M51 44.500H25.700A25.300 25.300 0 0 1 51 19.200z" fill="#df7350"/>' +
      letterBox(17.500, '#b7432a', 'P'),
  },
  {
    name: 'Code',
    body: tile('#fff') +
      '<path d="M60 18l1 17.500L31 59l-4 1-5.500-5q-1-1.500 0-3z" fill="#2862a6"/><path d="M60 73l1-17.500L31 32l-4-1-5.500 5q-1 1.500 0 3z" fill="#3478c2"/><path d="M60 18l13 6q2.300 1.200 2.300 3.500v36q0 2.300-2.300 3.500l-13 6z" fill="#489ae8"/>',
  },
  {
    name: 'Visual Studio',
    body: tile('#fff') +
      '<path d="M22.500 32l8.500-4v35l-8.500-4z" fill="#56398c"/><path d="M61.500 18v20L34 63l-3-1v-7z" fill="#6b4fa3"/><path d="M31 28l4 .500L61.500 54v19L22.500 32z" fill="#9470cc"/><path d="M61.500 18l12 6q2.300 1.200 2.300 3.500v36q0 2.300-2.300 3.500l-12 6z" fill="#bd90ec"/><path d="M61.500 18l14 8v8l-14 10z" fill="#c8a0f4"/>',
  },
  {
    name: 'Rider',
    body: '<defs><linearGradient id="rdL" x1="0" y1="0" x2=".2" y2="1"><stop offset="0" stop-color="#d8315c"/><stop offset=".5" stop-color="#e05a48"/><stop offset="1" stop-color="#f0a03c"/></linearGradient></defs>' +
      '<path d="M61 3.500L44 20l28 2z" fill="#3570e8"/><path d="M66 18l25.500 18-8 15 8 21.500L74 64z" fill="#c22c62"/><path d="M75 40l16.500 32.500L74 60z" fill="#8a3a90"/><path d="M7 19L32.500 2.700 55 20l5 51-20.300 16.700L16 78.700z" fill="url(#rdL)"/><path d="M7 19l25.500-16L24 32z" fill="#d63a54"/><path d="M32.500 2.700L55 20H27z" fill="#f0853e"/><path d="M16 78.700l24 9L59 70H24z" fill="#f09540"/><path d="M50 71l17 16.700 24.500-15L80 60z" fill="#2343ee"/><path d="M67 87.700l24.500-15L74 71z" fill="#2d63f0"/>' +
      jetBox('RD'),
  },
  {
    name: 'PyCharm', open: true,
    body: '<path d="M75 24l16 11-5 12-11 2z" fill="#55c8ee"/><path d="M12 16L42.600 2.300 59 18l-18 69-5.600.700L6.400 71z" fill="#66d592"/><path d="M12 16L42.600 2.300 24 25z" fill="#86e06c"/><path d="M6.400 71l29 16.700L42 70H24z" fill="#4fc99a"/><path d="M69.400 2.300L46 20h29z" fill="#9be868"/><path d="M69.400 2.300L56 20h19z" fill="#6cd060"/><path d="M81.400 39l10.300 39-26 9.700L31 76l2-6h40z" fill="#dcf65a"/><path d="M65.800 87.700L73 70l18.700 8z" fill="#c6f060"/>' +
      jetBox('PC'),
  },
  {
    name: 'WebStorm',
    body: '<path d="M6.600 11L28 2.300 40 8l14-4.300L62 20 28 75l-10 3.700z" fill="#5cc6f4"/><path d="M6.600 11L28 2.300 34 18l-10 20z" fill="#74dcf2"/><path d="M6.600 11L24 60l-6 18.700z" fill="#3f8cea"/><path d="M17.800 78.700L65 87.700l4-18H24z" fill="#2f6cf2"/><path d="M24 70l14 10 31-10z" fill="#4598f0"/><path d="M46 20L61.500 2l19.200 2.300L75 24z" fill="#f6f25c"/><path d="M80.700 4.300L91.400 31 75 40V18z" fill="#56a8ee"/><path d="M80.700 4.300L86 16 75 26V16z" fill="#bfe88a"/><path d="M75 31h16.400L84 39l7.400 18.700L75 69z" fill="#4a9ff0"/>' +
      jetBox('WS'),
  },
  {
    name: 'App Store',
    body: grad('asBg', '#4aabef', '#2c56d6') + tile('url(#asBg)') +
      '<g stroke="#eef3fb" stroke-width="7" stroke-linecap="round"><path d="M53 24.500L38 52M27 54h44M32.500 61l-2 4.500"/><path d="M45.500 24.500L67 66"/></g>',
  },
]

const csvBody =
  grad('csvPage', '#ffffff', '#ececec') +
  '<path d="M18 15h5v8h-5z" fill="#3564d6"/><path d="M25-1h27q6 1 12 9l6 10v24H25z" fill="#efefef"/><path d="M22 4h30q5 3 8 10l-4 20H22z" fill="#f7f7f7" stroke="#d7d7d7" stroke-width=".8"/><path d="M9.700 20.500q0-1.500 1.500-1.500H67l21 21v37.500q0 1.500-1.500 1.500H11.200q-1.500 0-1.500-1.500z" fill="url(#csvPage)"/><path d="M53 0q4 1 10 8L69.500 18 70 25 88 41H68.500q-1.500 0-1.500-1.500V22Q62 8 53 0z" fill="#f4f4f4" stroke="#cfcfcf" stroke-width=".8"/><path d="M14 24h4M14 27h18M14 29.500h20M14 32h18M36 24h3M36 27h29M36 29.500h30M36 32h28" stroke="#b4b4b4" stroke-width="1"/><text x="49.200" y="72.300" text-anchor="middle" font-family="Inter, sans-serif" font-weight="500" font-size="9.500" letter-spacing=".3" fill="#6a6a6a">CSV</text>'

const trashBody =
  '<defs><linearGradient id="binBody"><stop offset="0" stop-color="#cfd1d3"/><stop offset=".18" stop-color="#e6e6e6"/><stop offset=".6" stop-color="#d8d8d7"/><stop offset=".9" stop-color="#eeeeee"/><stop offset="1" stop-color="#c9cbcd"/></linearGradient></defs>' +
  '<ellipse cx="49" cy="12" rx="33" ry="8" fill="#b8babc"/><path d="M20 12l8-9 9-4 8 4 6 4 6-6 8 3 8 2 5 6-6 8H24z" fill="#dcdcdb"/><path d="M34 14l5-5 8 3-3 7z" fill="#66c2b4"/><path d="M50 8l5 7-6 5z" fill="#d6553a"/><path d="M56 10l6-3 5 6-6 5z" fill="#4a5fae"/><path d="M24 8l8 3-5 6zM62 3l8 5-8 3zM40 2l5 5-9 1zM30 15l10-1 4 5zM66 14l8-4 2 6z" fill="#4b4b4b"/><path d="M28 6l7 1-4 4zM52 16l8 1-3 5zM70 6l5 4-6 1z" fill="#fafafa"/>' +
  '<path d="M16 12q10 9.500 33 9.500T82 12l-8 70q-1 5-25 5t-25-5z" fill="url(#binBody)"/><path d="M16 12q10 9.500 33 9.500T82 12" fill="none" stroke="#f4f4f4" stroke-width="1.600"/><path d="M38 34q16 3 24-8-12 2-24 8z" fill="#f4f4f4" opacity=".8"/><path d="M26 30l6 46M70 34l-5 44" stroke="#fff" stroke-width="3" opacity=".35"/>'
</script>

<template>
  <div class="desktop">
    <header class="menubar">
      <Icon name="apple" class="apple" />
      <b>Chrome</b>
      <span v-for="m in menuBar" :key="m">{{ m }}</span>
      <i class="lang">A</i>
      <Icon name="battery" />
      <Icon name="wifi" />
      <Icon name="search" />
      <Icon name="control" />
      <Icon name="siri" />
      <span class="date">Вт, 11 окт.</span>
      <span class="clock">21:17</span>
    </header>

    <svg class="sky" width="2560" height="40"><path :d="starPath" fill="#5f789c" /></svg>

    <div class="desk-file"></div>
    <div class="desk-scrap"></div>
    <div class="back-window"></div>

    <main class="window">
      <div class="tabstrip">
        <div class="lights"><i class="red"></i><i class="amber"></i><i class="green"></i></div>
        <div class="tab idle">
          <Icon name="shield" />
          <span class="tab-title">unityServiceDataScience – IAM</span>
          <Icon name="close" />
        </div>
        <div class="tab active">
          <Icon name="sheetFav" />
          <span class="tab-title">Новая таблица - Google Таблицы</span>
          <Icon name="close" />
        </div>
        <Icon name="plusTab" class="newtab" />
        <Icon name="chevDown" class="tablist" />
      </div>

      <div class="navbar">
        <Icon name="back" />
        <Icon name="forward" />
        <Icon name="reload" />
        <div class="omnibox">
          <Icon name="lockBar" />
          <span class="url"><em>docs.google.com</em>/spreadsheets/d/19fGv6UYO9ka31rT2bL0L9pheVSZj-t_ZZ1LoqdQ52M0/edit#gid=0</span>
          <Icon name="share" />
          <Icon name="starBar" class="star" />
        </div>
        <Icon name="sidePanel" />
        <span class="avatar small">M</span>
        <Icon name="kebab" />
      </div>

      <div class="bookmarks">
        <Icon name="google" /><span>Gmail</span>
        <Icon name="youtube" /><span class="tight">YouTube</span>
        <Icon name="gmaps" /><span>Карты</span>
        <Icon name="translate" /><span>Перевести</span>
      </div>

      <div class="dochead">
        <Icon name="sheets" class="logo" />
        <div class="doc">
          <div class="titlerow">
            <span class="title">Новая таблица</span>
            <Icon name="starTitle" />
          </div>
          <nav class="docmenu">
            <span v-for="m in docMenu" :key="m">{{ m }}</span>
          </nav>
        </div>
        <Icon name="comment" class="comment" />
        <div class="meet"><Icon name="meet" /><Icon name="caretBlue" /></div>
        <div class="sharebtn"><Icon name="lockWhite" /><span>Настройки Доступа</span></div>
        <span class="avatar">M</span>
      </div>

      <div class="body">
        <section class="sheet">
          <div class="toolbar">
            <Icon name="undo" /><Icon name="redo" /><Icon name="print" /><Icon name="paint" />
            <hr />
            <span class="zoomval">100%</span><Icon name="caret" />
            <hr />
            <span>р.</span><span class="pct">%</span>
            <span class="dec">.0<Icon name="arrL" /></span>
            <span class="dec two">.00<Icon name="arrR" /></span>
            <span class="fmt">123</span><Icon name="caret" />
            <hr />
            <span class="font">По умолча...</span><Icon name="caret" />
            <hr />
            <span class="size">10</span><Icon name="caret" />
            <hr />
            <Icon name="bold" /><Icon name="italic" /><Icon name="strike" /><Icon name="textColor" class="tcolor" />
            <hr />
            <Icon name="fill" class="bucket" /><Icon name="borders" /><Icon name="merge" /><Icon name="caretPale" />
            <hr />
            <Icon name="align" /><Icon name="caret" />
            <Icon name="valign" /><Icon name="caret" />
            <Icon name="wrap" /><Icon name="caret" />
            <Icon name="rotate" /><Icon name="caret" />
            <hr />
            <Icon name="more" /><Icon name="chevUp" />
          </div>

          <div class="fxbar">
            <span class="cellref">A1</span>
            <Icon name="caret" />
            <span class="fx">fx</span>
            <hr />
          </div>

          <div class="gridwrap">
            <div class="grid">
              <div class="colheads">
                <div class="corner"></div>
                <div v-for="c in columns" :key="c" class="colhead" :class="{ on: c === 'A' }">{{ c }}</div>
                <div class="colhead last"></div>
              </div>
              <div class="rows">
                <div v-for="r in 18" :key="r" class="row">
                  <div class="rowhead" :class="{ on: r === 1 }">{{ r }}</div>
                  <div v-for="c in columns" :key="c" class="cell">
                    <div v-if="r === 1 && c === 'A'" class="cursor"><i></i></div>
                  </div>
                  <div class="cell last"></div>
                </div>
              </div>
            </div>
            <div class="vscroll">
              <div class="vcap"></div>
              <div class="vtrack"><i></i></div>
              <div class="vbtn up"><Icon name="triU" /></div>
              <div class="vbtn"><Icon name="triD" /></div>
            </div>
          </div>

          <div class="hscroll">
            <div class="hcap"></div>
            <div class="htrack"><i></i></div>
            <div class="hbtn prev"><Icon name="triL" /></div>
            <div class="hbtn"><Icon name="triR" /></div>
            <div class="hend"></div>
          </div>

          <div class="sheetbar">
            <Icon name="addSheet" />
            <Icon name="listSheets" />
            <div class="sheettab"><span>Лист1</span><Icon name="caretGreen" /></div>
            <Icon name="explore" class="explore" />
          </div>
        </section>

        <aside class="panel">
          <Icon name="calendar" />
          <Icon name="keep" />
          <Icon name="tasks" class="p-tasks" />
          <Icon name="contacts" class="p-contacts" />
          <Icon name="mapsPin" class="p-maps" />
          <hr />
          <Icon name="plusPanel" />
          <Icon name="chevRight" class="collapse" />
        </aside>
      </div>
    </main>

    <footer class="dock">
      <div v-for="a in dockApps" :key="a.name" class="app">
        <svg width="98" height="90" viewBox="0 0 98 90" v-html="a.body"></svg>
        <i v-if="a.open"></i>
      </div>
      <hr />
      <div class="app"><svg width="98" height="90" viewBox="0 0 98 90" v-html="csvBody"></svg></div>
      <div class="app"><svg width="98" height="90" viewBox="0 0 98 90" v-html="trashBody"></svg></div>
    </footer>
  </div>
</template>

<style>
body {
  background: #020a14;
  overflow: hidden;
}
</style>

<style scoped>
.desktop {
  position: relative;
  width: 2560px;
  height: 1600px;
  overflow: hidden;
  font-family: Inter, 'Liberation Sans', sans-serif;
  white-space: nowrap;
  background:
    linear-gradient(90deg, #20385c 0, #182c50 700px, #12254a 1500px, #0c1f44 2560px) 0 0 / 2560px 102px no-repeat,
    linear-gradient(180deg, #20385a 0, #2a4565 100px, #3a5a7b 235px, #3a5a7b 245px, #142a4e 250px, #12264a 340px, #101d38 440px, #0c1826 530px, #0e2030 660px, #12283a 672px, #1d4260 682px, #234966 820px, #1e4160 920px, #173450 1060px, #0f2539 1200px, #0b1b2b 1320px, #0a1624 1400px, #050d18 1498px) 0 102px / 28px 1498px no-repeat,
    linear-gradient(180deg, #0a1a3c 0, #081a3a 90px, #02060c 110px, #030a14 400px, #061420 600px, #02080e 900px, #05101a 1498px) 2532px 102px / 28px 1498px no-repeat,
    linear-gradient(90deg, #0b1a2a 0, #050e18 240px, #040c16 2300px, #03101c 2560px);
}
svg { display: block; flex: none; overflow: visible; }
hr { border: 0; margin: 0; }
em, i { font-style: normal; }

.menubar {
  display: grid;
  grid-template-columns: 66px 142px 108px 165px 195px 147px 160px 157px 146px 105px 461px 70px 87px 72px 63px 62px 59px 147px 80px;
  align-items: center;
  height: 48px;
  padding-left: 40px;
  padding-bottom: 3px;
  box-sizing: border-box;
  background: linear-gradient(90deg, #0e2244 0, #0a1d42 1400px, #071737 2560px);
  color: #e9ebef;
  font-size: 26px;
  font-weight: 500;
  line-height: 45px;
  letter-spacing: -0.35px;
}
.menubar b { font-weight: 700; }
.menubar > svg { position: relative; top: 1px; }
.menubar > .apple { top: -1px; }
.lang {
  width: 32px;
  height: 32px;
  margin-top: 3px;
  border-radius: 5px;
  background: #e9ebef;
  color: #0a1c40;
  text-align: center;
  line-height: 32px;
  font-size: 24px;
}
.date { letter-spacing: 1.2px; }
.clock { letter-spacing: 1.9px; }

.sky { position: absolute; left: 0; top: 49px; }
.desk-file {
  position: absolute;
  left: 2114px;
  top: 58px;
  width: 144px;
  height: 60px;
  box-sizing: border-box;
  border: 4px solid #4b5567;
  border-radius: 8px;
  background: #071326;
}
.desk-scrap {
  position: absolute;
  left: 2380px;
  top: 84px;
  width: 42px;
  height: 12px;
  background: #22355c;
  border-top: 1px dashed #6d7890;
  transform: rotate(7deg);
}
.back-window {
  position: absolute;
  left: 19px;
  top: 89px;
  width: 2521px;
  height: 1331px;
  box-sizing: border-box;
  border: 1px solid #050708;
  border-radius: 22px;
  background: linear-gradient(180deg, #3a3a3c 0, #3a3a3c 113px, #242426 114px, #242426 266px, #363638 267px);
  box-shadow: inset 0 2px 0 #77787b, inset 2px 0 0 #505153;
}
.window {
  position: absolute;
  left: 28px;
  top: 102px;
  width: 2514px;
  height: 1368px;
  border-radius: 20px;
  overflow: hidden;
  background: #fff;
  display: flex;
  flex-direction: column;
}

.tabstrip {
  display: flex;
  align-items: flex-end;
  height: 84px;
  flex: none;
  background: #dfe1e5;
  box-shadow: inset 0 2px 0 #f1f2f4;
}
.lights { display: flex; gap: 16px; padding: 0 68px 29px 42px; }
.lights i { width: 24px; height: 24px; border-radius: 50%; box-shadow: inset 0 0 0 1px rgba(0, 0, 0, 0.12); }
.red { background: #ec6a5e; }
.amber { background: #f5bf4f; }
.green { background: #61c554; }
.tab { display: flex; align-items: center; height: 68px; box-sizing: border-box; color: #3c4043; font-size: 24px; }
.idle { width: 450px; }
.idle .tab-title { margin-left: 19px; width: 350px; }
.idle > svg:last-child { margin-left: 17px; }
.active {
  position: relative;
  width: 480px;
  padding-left: 24px;
  background: #fff;
  border-radius: 16px 16px 0 0;
}
.active::before, .active::after {
  content: '';
  position: absolute;
  bottom: 0;
  width: 16px;
  height: 16px;
}
.active::before { left: -16px; background: radial-gradient(circle at 0 0, transparent 15.500px, #fff 16px); }
.active::after { right: -16px; background: radial-gradient(circle at 100% 0, transparent 15.500px, #fff 16px); }
.active .tab-title { margin-left: 16px; width: 352px; }
.active > svg:last-child { margin-left: 15px; }
.tab-title {
  overflow: hidden;
  margin-top: -2px;
  letter-spacing: -0.2px;
  -webkit-mask-image: linear-gradient(90deg, #000 86%, transparent 100%);
  mask-image: linear-gradient(90deg, #000 86%, transparent 100%);
}
.newtab { margin: 0 0 22px 32px; }
.tablist { margin: 0 34px 27px auto; }

.navbar {
  display: grid;
  grid-template-columns: 64px 64px 57px 2112px 56px 83px 6px;
  align-items: center;
  height: 72px;
  flex: none;
  padding-left: 31px;
}
.omnibox {
  display: flex;
  align-items: center;
  width: 2082px;
  height: 56px;
  box-sizing: border-box;
  border-radius: 28px;
  background: #f1f3f4;
  padding-left: 28px;
}
.url { width: 1903px; margin-left: 24px; font-size: 28px; color: #696b6e; }
.url em { color: #202124; }
.star { margin-left: 35px; }
.avatar {
  width: 64px;
  height: 64px;
  border-radius: 50%;
  background: #4496a6;
  color: #fff;
  font: 400 36px/64px Roboto, sans-serif;
  text-align: center;
}
.avatar.small { width: 44px; height: 44px; font-size: 25px; line-height: 44px; }

.bookmarks {
  display: grid;
  grid-template-columns: 44px 99px 47px 130px 46px 106px 47px 200px;
  align-items: center;
  height: 56px;
  flex: none;
  padding: 0 0 8px 32px;
  border-bottom: 2px solid #dcdcde;
  font-size: 24px;
  color: #3c4043;
}
.tight { letter-spacing: -0.6px; }

.dochead {
  display: flex;
  height: 128px;
  flex: none;
  border-bottom: 2px solid #dadce0;
  font-family: Roboto, sans-serif;
}
.logo { margin: 28px 0 0 46px; }
.doc { width: 1635px; margin-left: 42px; }
.titlerow { display: flex; align-items: center; height: 32px; margin-top: 28px; }
.title { width: 290px; padding-left: 4px; box-sizing: border-box; font-size: 36px; color: #777; letter-spacing: -0.3px; }
.docmenu {
  display: grid;
  grid-template-columns: 99px 128px 80px 136px 134px 135px 213px 196px 200px;
  margin-top: 20px;
  padding-left: 2px;
  font-size: 28px;
  line-height: 33px;
  color: #202124;
  letter-spacing: 0.3px;
}
.comment { margin: 43px 0 0 0; }
.meet {
  display: flex;
  align-items: center;
  width: 108px;
  height: 72px;
  margin: 28px 24px 0 44px;
  box-sizing: border-box;
  border: 2px solid #dadce0;
  border-radius: 36px;
  padding-left: 19px;
  gap: 8px;
}
.sharebtn {
  display: flex;
  align-items: center;
  width: 378px;
  height: 72px;
  margin-top: 28px;
  box-sizing: border-box;
  border-radius: 8px;
  background: #3e7f40;
  color: #fff;
  padding-left: 30px;
  font-size: 28px;
  font-weight: 500;
}
.sharebtn span { margin: -3px 0 0 17px; letter-spacing: 1.1px; }
.dochead .avatar { margin: 32px 0 0 40px; }

.body { display: flex; flex: 1; }
.sheet { display: flex; flex-direction: column; width: 2402px; border-right: 2px solid #dadce0; }

.toolbar {
  display: grid;
  grid-template-columns:
    57px 56px 60px 48px 32px 84px 32px 27px 59px 48px 54px 53px 44px 34px 34px 160px 34px
    31px 85px 32px 28px 53px 56px 50px 59px 25px 60px 59px 52px 34px 22px 40px 40px 38px 38px 40px
    37px 41px 34px 24px 389px 24px;
  align-items: center;
  width: 2331px;
  height: 76px;
  flex: none;
  padding-left: 71px;
  border-bottom: 2px solid #dadce0;
  font: 500 24px/28px Roboto, sans-serif;
  color: #5f6368;
}
.toolbar > span { margin-top: -2px; }
.toolbar hr { width: 2px; height: 40px; background: #dadce0; }
.zoomval, .size, .font, .fmt { color: #55585c; }
.font { letter-spacing: -0.25px; }
.fmt { letter-spacing: -0.6px; }
.dec { position: relative; font-weight: 400; font-size: 26px; }
.dec svg { position: absolute; left: 15px; top: 26px; }
.dec.two svg { left: 21px; }
.tcolor { margin-top: 8px; }
.bucket { margin-top: -8px; }

.fxbar {
  display: grid;
  grid-template-columns: 162px 28px 87px 2px;
  align-items: center;
  height: 46px;
  flex: none;
  padding-left: 16px;
  border-bottom: 2px solid #bfbfbf;
  font: 400 26px/46px Roboto, sans-serif;
  color: #000;
}
.fxbar svg { margin-top: 6px; }
.fx {
  border-left: 2px solid #dadce0;
  padding-left: 28px;
  height: 46px;
  line-height: 40px;
  font-family: 'Liberation Serif', serif;
  font-style: italic;
  font-size: 38px;
  color: #c0c2c4;
}
.fxbar hr { height: 34px; background: #c6c6c6; }

.gridwrap { display: flex; height: 786px; flex: none; border-bottom: 2px solid #d4d4d6; }
.grid { width: 2378px; overflow: hidden; border-right: 2px solid #d4d4d6; }
.colheads, .row { display: grid; grid-template-columns: 92px repeat(11, 202px) 64px; }
.colheads { height: 48px; font: 400 22px/46px Roboto, sans-serif; color: #5f6368; text-align: center; }
.corner { box-sizing: border-box; background: #f8f9fa; border: solid #bababa; border-width: 0 10px 10px 0; }
.colhead { box-sizing: border-box; background: #f8f9fb; border-right: 2px solid #c0c0c0; border-bottom: 2px solid #bcbcbc; }
.colhead.on, .rowhead.on { background: #e8e9eb; }
.colhead.last, .cell.last { border-right: 0; }
.rows { height: 738px; overflow: hidden; }
.row { height: 42px; }
.rowhead {
  box-sizing: border-box;
  background: #f8f9fb;
  border-right: 2px solid #c0c0c0;
  border-bottom: 2px solid #c0c0c0;
  font: 400 22px/39px Roboto, sans-serif;
  color: #5f6368;
  text-align: center;
}
.cell { position: relative; box-sizing: border-box; border-right: 2px solid #e2e2e3; border-bottom: 2px solid #e2e2e3; }
.cursor {
  position: absolute;
  left: 0;
  top: 0;
  width: 202px;
  height: 42px;
  box-sizing: border-box;
  border: solid #3871e0;
  border-width: 2px 4px 4px 2px;
  z-index: 2;
}
.cursor i {
  position: absolute;
  right: -10px;
  bottom: -10px;
  width: 12px;
  height: 12px;
  border: 2px solid #fff;
  background: #3871e0;
}
.vscroll { width: 22px; display: flex; flex-direction: column; }
.vcap { height: 46px; background: #f8f8f8; border-bottom: 2px solid #d9d9d9; }
.vtrack { flex: 1; padding: 2px; }
.vtrack i { display: block; width: 18px; height: 52px; border-radius: 9px; background: #dadce0; }
.vbtn {
  display: flex;
  align-items: center;
  justify-content: center;
  height: 30px;
  background: #f8f8f8;
  border-top: 2px solid #d9d9d9;
}
.up svg { margin-top: -4px; }
.hscroll { display: flex; height: 22px; flex: none; border-bottom: 2px solid #e2e4e8; }
.hcap { width: 90px; background: #f8f8f8; border-right: 2px solid #d4d4d6; }
.htrack { width: 2222px; padding: 2px; box-sizing: border-box; }
.htrack i { display: block; width: 963px; height: 18px; border-radius: 9px; background: #dadce0; }
.hbtn {
  display: flex;
  align-items: center;
  justify-content: center;
  width: 30px;
  background: #f8f8f8;
  border-left: 2px solid #d9d9d9;
}
.prev svg { margin-left: -4px; }
.hend { flex: 1; background: #f8f8f8; border-left: 2px solid #d9d9d9; }

.sheetbar {
  display: flex;
  align-items: center;
  flex: 1;
  background:
    linear-gradient(90deg, #f1f3f4 140px, rgba(241, 243, 244, 0) 420px, rgba(241, 243, 244, 0) 2040px, #f1f3f4 2390px),
    linear-gradient(180deg, #f1f3f4 0, #ecedef 35%, #e2e3e5 70%, #d5d6d8 100%);
}
.sheetbar > svg { margin: -9px 40px 0 99px; }
.sheetbar > svg + svg { margin: -8px 0 0 0; }
.sheettab {
  display: flex;
  align-items: center;
  width: 180px;
  height: 78px;
  margin-left: 47px;
  box-sizing: border-box;
  padding: 0 0 3px 34px;
  background: linear-gradient(180deg, #fff 40%, #ebebeb);
  box-shadow: 0 0 5px rgba(0, 0, 0, 0.22);
  font: 500 28px/33px Roboto, sans-serif;
  color: #397d3b;
}
.sheettab span { width: 98px; letter-spacing: 0.5px; }
.sheetbar > .explore { margin: -1px 41px 0 auto; }

.panel { display: flex; flex-direction: column; align-items: center; width: 110px; padding-top: 37px; gap: 74px; }
.panel hr { width: 40px; height: 2px; margin-top: -3px; background: #dadce0; }
.panel > svg { position: relative; left: 1px; }
.p-tasks { margin: 2px 0 0 2px; }
.p-contacts { margin-top: 3px; }
.p-maps { margin-top: 2px; }
.panel > .collapse { margin-top: auto; margin-bottom: 46px; left: -1px; }

.dock {
  position: absolute;
  left: 222px;
  top: 1474px;
  width: 2116px;
  height: 116px;
  box-sizing: border-box;
  display: flex;
  padding: 8px 4px 0;
  border: 2px solid #6d747f;
  border-radius: 34px;
  background: linear-gradient(90deg, #535e6a 0, #555c69 35%, #55606c 60%, #545d67 100%);
}
.app { display: flex; flex-direction: column; align-items: center; width: 98px; }
.app svg { filter: drop-shadow(0 2px 2px rgba(0, 0, 0, 0.25)); }
.app i { width: 8px; height: 8px; margin-top: 4px; border-radius: 50%; background: #000; }
.dock hr { width: 2px; height: 84px; margin: 6px 20px 0 24px; background: #1c2631; }
</style>
